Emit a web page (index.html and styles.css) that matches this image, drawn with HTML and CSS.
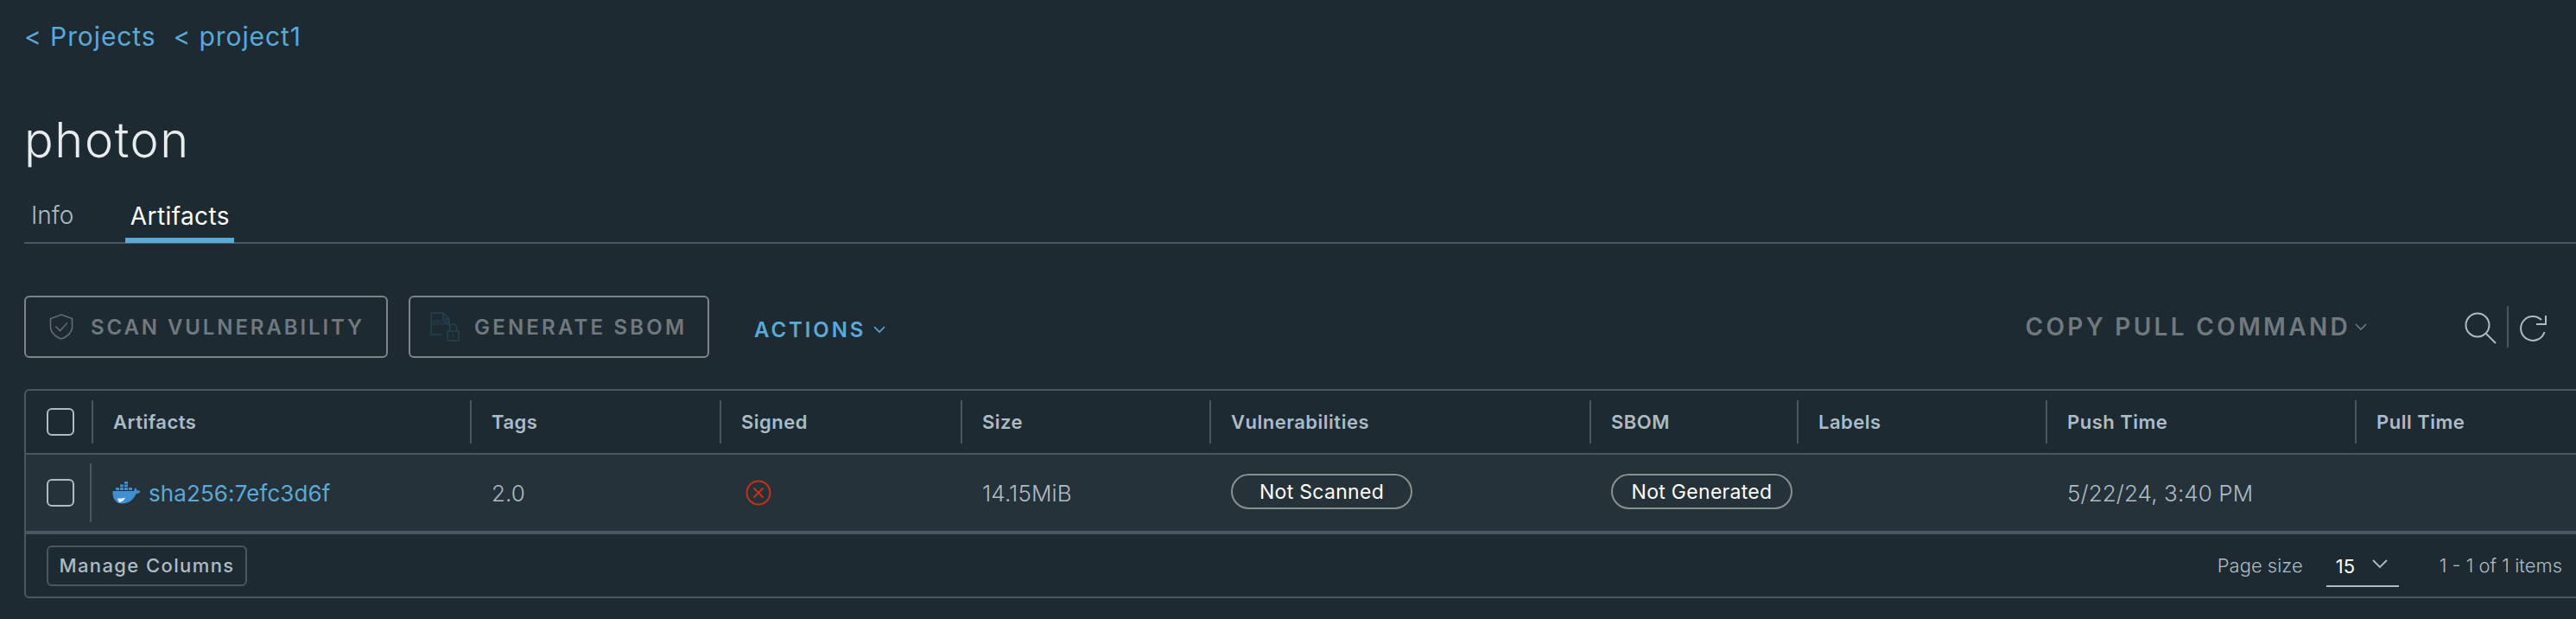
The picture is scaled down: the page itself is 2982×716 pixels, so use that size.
FILE: index.html
```html
<!DOCTYPE html>
<html lang="en">
<head>
<meta charset="utf-8">
<title>photon</title>
<link rel="stylesheet" href="styles.css">
</head>
<body>
<main class="page">
  <nav class="crumbs"><a class="crumb">&lt; Projects</a><a class="crumb">&lt; project1</a></nav>
  <h1 class="title">photon</h1>
  <div class="tabs">
    <div class="tab tab-info">Info</div>
    <div class="tab tab-active">Artifacts</div>
  </div>
  <div class="toolbar">
    <button class="btn btn-scan">
      <svg class="btn-icon" width="28" height="30" viewBox="0 0 28 30" fill="none" stroke="#616c72" stroke-width="1.6"><path d="M14 1 L26.5 5.5 V15 C26.5 22 20 27 14 29 C8 27 1.5 22 1.5 15 V5.5 Z"/><path d="M7.5 14.5 L12.5 19.5 L21 10.5"/></svg>
      <span>SCAN VULNERABILITY</span>
    </button>
    <button class="btn btn-sbom">
      <svg class="btn-icon" width="34" height="34" viewBox="0 0 34 34" fill="none" stroke="#26414f" stroke-width="1.5"><path d="M14 26 H1 V1 H15 L22 8 V16 M15 1 V8 H22"/><rect x="20" y="22" width="13" height="11"/><path d="M22.5 22 V18 A4 4 0 0 1 30.5 18 V22 M26.5 26 V29"/><text x="2" y="15" class="sbom-mark">SBOM</text></svg>
      <span>GENERATE SBOM</span>
    </button>
    <div class="actions">ACTIONS
      <svg width="14" height="9" viewBox="0 0 14 9" fill="none" stroke="#5aa9d8" stroke-width="1.6"><path d="M1 1 L7 7 L13 1"/></svg>
    </div>
    <div class="toolbar-right">
      <div class="copy">COPY PULL COMMAND
        <svg width="14" height="9" viewBox="0 0 14 9" fill="none" stroke="#6f797e" stroke-width="1.6"><path d="M1 1 L7 7 L13 1"/></svg>
      </div>
      <svg class="search" width="38" height="38" viewBox="0 0 38 38" fill="none" stroke="#adbbc4" stroke-width="2"><circle cx="15" cy="15" r="13.5"/><path d="M25 25 L36 36"/></svg>
      <div class="tool-sep"></div>
      <svg class="refresh" width="36" height="36" viewBox="0 0 36 36" fill="none" stroke="#adbbc4" stroke-width="2"><path d="M30.5 20 A14 14 0 1 1 27 6"/><path d="M21 11 H32 V1"/></svg>
    </div>
  </div>
  <section class="table">
    <div class="grid head">
      <div class="cell-check"><span class="checkbox"></span></div>
      <div class="th">Artifacts</div>
      <div class="th">Tags</div>
      <div class="th">Signed</div>
      <div class="th">Size</div>
      <div class="th">Vulnerabilities</div>
      <div class="th">SBOM</div>
      <div class="th">Labels</div>
      <div class="th">Push Time</div>
      <div class="th">Pull Time</div>
    </div>
    <div class="grid row">
      <div class="cell-check cell-check-row"><span class="checkbox"></span></div>
      <div class="td td-name">
        <svg class="docker" width="33" height="26" viewBox="0 0 33 26">
          <path fill="#3f8fd2" d="M0.5 11 H25 C25.5 9 26 8 26.5 7 C28 8 28.5 9.5 28.5 10.5 C30 10 31.5 10.5 32.5 11.5 C31.5 13.5 29.5 14 27.5 14 C25.5 20 20 25.5 11 25.5 C3 25.5 0 18 0.5 11 Z"/>
          <path fill="#dfeef8" d="M6 19.5 C9 19.5 12 19.5 15 18.5 C14 21.5 11 24 8 24 C7 23 6.5 21 6 19.5 Z"/>
          <path fill="#3f8fd2" d="M4 7 H8 V10 H4 Z M9 7 H13 V10 H9 Z M14 7 H18 V10 H14 Z M19 7 H23 V10 H19 Z M9 3.5 H13 V6.2 H9 Z M14 3.5 H18 V6.2 H14 Z M14 0 H18 V2.7 H14 Z"/>
        </svg>
        <a class="link">sha256:7efc3d6f</a>
      </div>
      <div class="td">2.0</div>
      <div class="td">
        <svg class="signed" width="30" height="30" viewBox="0 0 30 30" fill="none" stroke="#c9301a" stroke-width="2"><circle cx="15" cy="15" r="13.5"/><path d="M9.5 9.5 L20.5 20.5 M20.5 9.5 L9.5 20.5"/></svg>
      </div>
      <div class="td">14.15MiB</div>
      <div class="td"><span class="pill pill-scan">Not Scanned</span></div>
      <div class="td"><span class="pill pill-sbom">Not Generated</span></div>
      <div class="td"></div>
      <div class="td">5/22/24, 3:40 PM</div>
      <div class="td"></div>
    </div>
    <div class="foot">
      <button class="manage">Manage Columns</button>
      <div class="pager">
        <span class="page-size">Page size</span>
        <div class="select"><span>15</span>
          <svg width="18" height="11" viewBox="0 0 18 11" fill="none" stroke="#adbbc4" stroke-width="1.8"><path d="M1 1 L9 9 L17 1"/></svg>
        </div>
        <span class="count">1 - 1 of 1 items</span>
      </div>
    </div>
  </section>
</main>
</body>
</html>
```
FILE: styles.css
```css
* { box-sizing: border-box; }
html, body { margin: 0; padding: 0; background: #1e2a32; overflow: hidden; }
body { width: 2982px; height: 716px; font-family: Inter, "Open Sans", sans-serif; color: #adbbc4; }
.page { padding: 22px 0 0 28px; }
.crumbs { display: flex; gap: 20px; height: 40px; align-items: center; }
.crumb { color: #5aa9d8; font-size: 30px; letter-spacing: 0.9px; }
.title { margin: 64px 0 2px 0; height: 72px; font-size: 56px; line-height: 72px; font-weight: 300; color: #e9ecef; letter-spacing: 1.6px; }
.tabs { height: 82px; display: flex; align-items: flex-end; border-bottom: 2px solid #485764; }
.tab { height: 52px; font-size: 28px; line-height: 42px; font-weight: 300; }
.tab-info { margin-left: 8px; margin-right: 60px; color: #adbbc4; }
.tab-active { width: 126px; margin-bottom: -1px; text-align: center; color: #fff; font-weight: 400; letter-spacing: 0.4px; border-bottom: 6px solid #5aa9d8; }
.toolbar { margin-top: 60px; height: 72px; display: flex; align-items: center; }
.btn { height: 72px; background: none; border: 2px solid #7b8488; border-radius: 6px; font-family: inherit; color: #6f797e; font-size: 24px; font-weight: 600; letter-spacing: 2.9px; display: flex; align-items: center; padding: 0; }
.btn-scan { width: 421px; padding-left: 27px; gap: 20px; }
.btn-sbom { width: 348px; margin-left: 24px; padding-left: 23px; gap: 17px; letter-spacing: 3.2px; }
.sbom-mark { font-size: 7px; fill: #26414f; stroke: none; font-family: Inter, sans-serif; letter-spacing: 0; }
.actions { margin-left: 52px; margin-top: 7px; font-size: 24px; font-weight: 600; letter-spacing: 2.9px; color: #5aa9d8; display: flex; align-items: center; gap: 9px; }
.toolbar-right { margin-left: auto; display: flex; align-items: center; padding-right: 31px; }
.copy { font-size: 28px; font-weight: 600; letter-spacing: 3.3px; color: #6f797e; display: flex; align-items: center; gap: 5px; margin-right: 113px; }
.search { margin-top: 4px; }
.tool-sep { width: 2px; height: 48px; background: #485764; margin: 0 11px; }
.refresh { margin-top: 8px; }
.table { margin-top: 36px; border: 2px solid #485764; border-right: 0; border-radius: 6px 0 0 6px; }
.grid { display: grid; grid-template-columns: 76px 438px 289px 279px 288px 440px 240px 288px 358px 1fr; }
.head { height: 74px; border-bottom: 2px solid #485764; align-items: center; }
.row { height: 92px; background: #263239; border-bottom: 4px solid #485764; align-items: center; }
.cell-check { display: flex; align-items: center; justify-content: center; padding-left: 4px; height: 50px; }
.cell-check-row { height: 68px; border-right: 2px solid #485764; padding-left: 6px; }
.checkbox { width: 32px; height: 32px; border: 2px solid #adbbc4; border-radius: 6px; display: block; }
.th { height: 50px; border-left: 2px solid #485764; padding-left: 23px; display: flex; align-items: center; font-size: 22px; font-weight: 600; color: #adbbc4; letter-spacing: 0.5px; }
.td { padding-left: 25px; display: flex; align-items: center; font-size: 26px; font-weight: 300; color: #adbbc4; letter-spacing: 0.1px; }
.td-name { gap: 9px; padding-left: 24px; }
.signed { margin-left: 5px; }
.link { color: #5aa9d8; font-weight: 400; }
.pill { height: 41px; border: 2px solid #8a8f91; border-radius: 21px; display: flex; align-items: center; justify-content: center; color: #fff; font-size: 23px; font-weight: 400; letter-spacing: 0.3px; margin-top: -3px; }
.pill-scan { width: 210px; }
.pill-sbom { width: 210px; }
.foot { height: 72px; display: flex; align-items: center; justify-content: space-between; padding: 0 16px 0 24px; }
.manage { width: 232px; height: 47px; background: none; border: 2px solid #485764; border-radius: 6px; font-family: inherit; color: #adbbc4; font-size: 22px; font-weight: 500; letter-spacing: 1.4px; padding: 0; }
.pager { display: flex; align-items: center; font-size: 22px; font-weight: 300; color: #adbbc4; }
.page-size { margin-right: 27px; }
.select { width: 84px; height: 46px; padding: 0 13px 0 11px; border-bottom: 2px solid #adbbc4; display: flex; align-items: center; justify-content: space-between; color: #fff; margin-top: 4px; font-weight: 400; }
.select svg { margin-top: -6px; }
.count { margin-left: 47px; }
```
